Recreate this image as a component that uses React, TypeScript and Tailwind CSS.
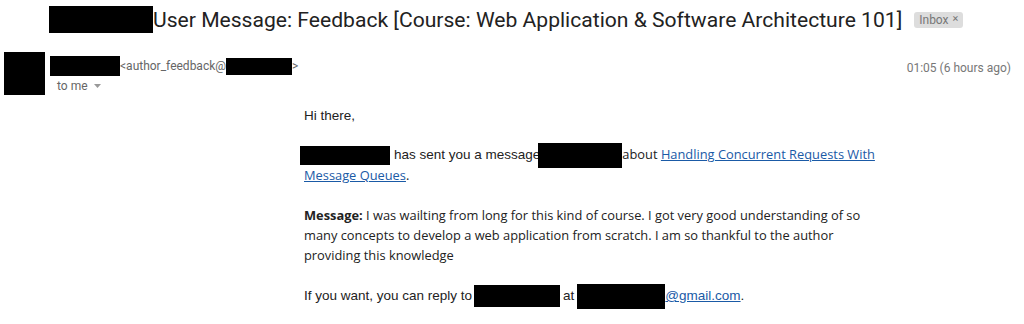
import React from "react";

const sans = "font-['Liberation_Sans',Arial,sans-serif] text-[13.5px]";
const humanist = "font-['Open_Sans','Noto_Sans',sans-serif] text-[12.85px]";

function Redacted({ className }: { className: string }) {
  return <span className={`inline-block bg-black align-middle ${className}`} />;
}

export default function App() {
  return (
    <div className="w-[1024px] h-[324px] overflow-hidden bg-white text-[#222]">
      {/* Subject */}
      <div className="flex items-center pl-[49px] pt-[6px]">
        <Redacted className="w-[104px] h-[27px]" />
        <h1 className="font-['Roboto',sans-serif] text-[21.1px] leading-[27px] text-[#222] whitespace-nowrap">
          User Message: Feedback [Course: Web Application &amp; Software Architecture 101]
        </h1>
        <span className="ml-[12px] flex items-center gap-[4px] rounded-[3px] bg-[#dddddd] px-[5px] h-[16px] font-['Roboto',sans-serif] text-[12px] text-[#777]">
          Inbox <span className="text-[11px]">×</span>
        </span>
      </div>

      {/* Sender row */}
      <div className="flex mt-[19px] pl-[4px] pr-[13px]">
        <Redacted className="w-[41px] h-[43px]" />
        <div className="ml-[5px] flex-1 font-['Roboto',sans-serif]">
          <div className="flex items-center h-[20px] mt-[4px]">
            <Redacted className="w-[70px] h-[20px]" />
            <span className="text-[12px] text-[#666]">&lt;author_feedback@</span>
            <Redacted className="w-[66px] h-[17px]" />
            <span className="text-[12px] text-[#666]">&gt;</span>
          </div>
          <div className="flex items-center gap-[6px] pl-[7px] mt-[1px] text-[12px] text-[#666]">
            to me
            <svg width="7" height="4" viewBox="0 0 7 4">
              <path d="M0 0h7L3.5 4z" fill="#999" />
            </svg>
          </div>
        </div>
        <div className="mt-[7px] font-['Roboto',sans-serif] text-[12px] text-[#777]">01:05 (6 hours ago)</div>
      </div>

      {/* Body */}
      <div className="pl-[304px] pt-[11px] text-[13px] leading-[20px] text-[#222]">
        <p className={`${sans} mb-[18px]`}>Hi there,</p>
        <p className="mb-[20px] w-[600px]">
          <Redacted className="w-[90px] h-[19px] -ml-[4px]" />
          <span className={`${sans} ml-[4px]`}>has sent you a message</span>
          <Redacted className="w-[84px] h-[25px] -my-[3px] -ml-[2px]" />
          <span className={humanist}>
            about{" "}
            <a href="#" className="text-[#1a5aa6] underline">
              Handling Concurrent Requests With Message Queues
            </a>
            .
          </span>
        </p>
        <p className={`${humanist} mb-[21px] w-[566px]`}>
          <b>Message:</b> I was wailting from long for this kind of course. I got very good understanding of so many
          concepts to develop a web application from scratch. I am so thankful to the author providing this knowledge
        </p>
        <p className={sans}>
          If you want, you can reply to
          <Redacted className="w-[86px] h-[22px] -my-[2px] ml-[2px]" />
          <span className="ml-[3px]">at</span>
          <Redacted className="w-[88px] h-[25px] -my-[3px] ml-[3px]" />
          <a href="#" className="text-[#1a5aa6] underline">
            @gmail.com
          </a>
          .
        </p>
      </div>
    </div>
  );
}
